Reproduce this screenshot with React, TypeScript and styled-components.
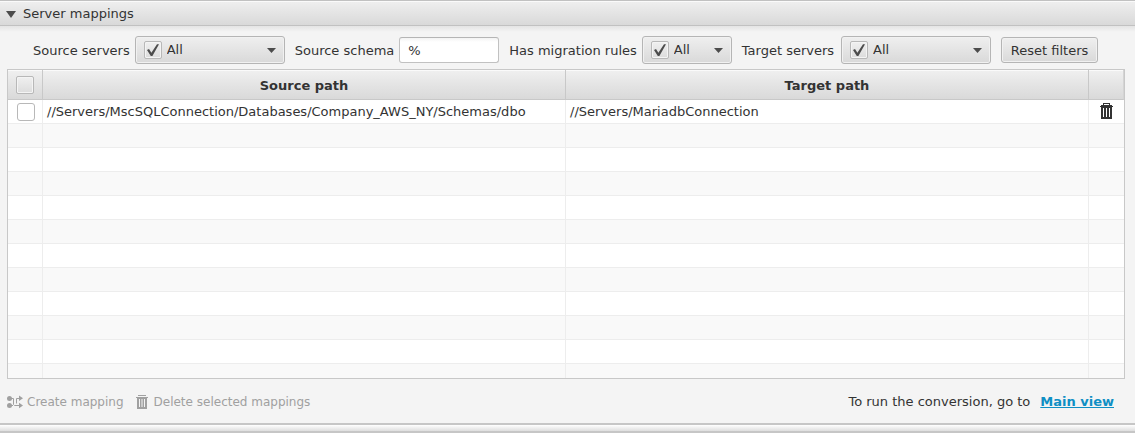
import React from "react";
import styled, { createGlobalStyle } from "styled-components";

const GlobalStyle = createGlobalStyle`
  * { box-sizing: border-box; }
  body {
    margin: 0;
    background: #f4f4f4;
    color: #333;
    font: 13px/16px "DejaVu Sans", Verdana, sans-serif;
  }
  button, input, select { font: inherit; color: inherit; margin: 0; }
`;

const Page = styled.main`
  display: flex;
  flex-direction: column;
`;

const TitleButton = styled.button`
  display: flex;
  align-items: center;
  gap: 7px;
  height: 26px;
  padding: 2px 6px 0;
  border: solid #c1c1c1;
  border-width: 1px 0;
  background: linear-gradient(#efefef, #d9d9d9);
  box-shadow: inset 0 1px #fafafa;
`;

const Content = styled.section`
  padding: 10px 10px 0 7px;
  background: linear-gradient(#e4e4e4, #f4f4f4 6px);
`;

const Filters = styled.form`
  display: flex;
  align-items: center;
  gap: 10px;
  height: 28px;
  margin: 0 0 5px 26px;
  white-space: nowrap;
`;

const Field = styled.div<{ $gap?: number }>`
  display: flex;
  align-items: center;
  gap: ${({ $gap = 5 }) => $gap}px;
`;

const FieldLabel = styled.label`
  padding-top: 2px;
`;

const Stack = styled.div<{ $width?: number }>`
  display: grid;
  align-items: center;
  width: ${({ $width = 18 }) => $width}px;
  > * { grid-area: 1 / 1; }
`;

const Select = styled.select`
  appearance: none;
  width: 100%;
  height: 28px;
  padding: 0 24px 0 31px;
  border: 1px solid #b5b5b5;
  border-radius: 3px;
  background: linear-gradient(#efefef, #d9d9d9);
  box-shadow: inset 0 0 0 1px #f1f1f1;
`;

const SelectTick = styled.span`
  justify-self: start;
  margin-left: 9px;
  pointer-events: none;
`;

const SelectArrow = styled.svg`
  justify-self: end;
  margin-right: 9px;
  pointer-events: none;
`;

const CheckInput = styled.input<{ $plain?: boolean }>`
  appearance: none;
  width: 18px;
  height: 18px;
  border: 1px solid #b8b8b8;
  border-radius: ${({ $plain }) => ($plain ? 3 : 2)}px;
  background: ${({ $plain }) => ($plain ? "#fff" : "linear-gradient(#f0f0f0, #dcdcdc)")};
  box-shadow: inset 0 0 0 1px ${({ $plain }) => ($plain ? "#fff" : "#f4f4f4")};
`;

const TickMark = styled.svg`
  pointer-events: none;
`;

const TextInput = styled.input`
  width: 100px;
  height: 26px;
  padding: 0 8px;
  border: 1px solid #c1c1c1;
  border-top-color: #b5b5b5;
  border-radius: 3px;
  background: linear-gradient(#f3f3f3, #fff 4px);
`;

const ResetButton = styled.button`
  height: 26px;
  min-width: 97px;
  padding: 2px 8px 0;
  border: 1px solid #b5b5b5;
  border-radius: 3px;
  background: linear-gradient(#efefef, #d9d9d9);
  box-shadow: inset 0 0 0 1px #f1f1f1;
`;

const TableView = styled.div`
  height: 310px;
  overflow: hidden;
  border: 1px solid #c8c8c8;
  background: #fff;
`;

const Table = styled.table`
  width: 100%;
  table-layout: fixed;
  border-collapse: separate;
  border-spacing: 0;
`;

const NarrowCol = styled.col`
  width: 35px;
`;

const HeadCell = styled.th<{ $control?: boolean }>`
  height: 30px;
  padding: ${({ $control }) => ($control ? "0 8px" : "2px 8px 0")};
  border-right: 1px solid #c8c8c8;
  border-bottom: 1px solid #c8c8c8;
  background: linear-gradient(#fafafa 1px, #efefef 1px, #d9d9d9);
  &:last-child { border-right-color: #d4d4d4; }
`;

const Row = styled.tr`
  background: #fff;
  &:nth-child(even) { background: #f9f9f9; }
`;

const Cell = styled.td<{ $inset?: number }>`
  height: 24px;
  padding: 0 0 0 ${({ $inset = 4 }) => $inset}px;
  border-right: 1px solid #ededed;
  border-bottom: 1px solid #ededed;
  white-space: nowrap;
  overflow: hidden;
  &:last-child { border-right: 0; }
`;

const IconButton = styled.button`
  display: grid;
  place-items: center;
  width: 35px;
  height: 22px;
  padding: 0 0 2px;
  border: 0;
  background: none;
  color: #333;
`;

const Footer = styled.footer`
  display: flex;
  justify-content: space-between;
  align-items: center;
  height: 44px;
  padding: 2px 11px 0 0;
`;

const Actions = styled.div`
  display: flex;
  gap: 12px;
  font-size: 12px;
`;

const ActionButton = styled.button<{ $gap: number }>`
  display: flex;
  align-items: center;
  gap: ${({ $gap }) => $gap}px;
  padding: 0;
  border: 0;
  background: none;
  &:disabled { color: #a0a0a0; }
`;

const MainLink = styled.a`
  margin-left: 10px;
  color: #0f8fc4;
  font-weight: bold;
`;

const Divider = styled.div`
  height: 10px;
  border: solid #c6c6c6;
  border-width: 2px 0;
  background: linear-gradient(#fff, #dedede);
`;

function CheckBox({ label, checked, plain }: { label: string; checked?: boolean; plain?: boolean }) {
  return (
    <Stack>
      <CheckInput type="checkbox" aria-label={label} defaultChecked={checked} $plain={plain} />
      {checked && (
        <TickMark width="18" height="18" viewBox="0 0 18 18" aria-hidden="true">
          <path d="M3 9 5 8 7.4 11.8 13 3.2 15 3.2 8.4 15 6.8 15Z" fill="#4c4c4c" />
        </TickMark>
      )}
    </Stack>
  );
}

type FilterSelectProps = { id: string; label: string; width: number; gap?: number };

function FilterSelect({ id, label, width, gap }: FilterSelectProps) {
  return (
    <Field $gap={gap}>
      <FieldLabel htmlFor={id}>{label}</FieldLabel>
      <Stack $width={width}>
        <Select id={id}>
          <option>All</option>
        </Select>
        <SelectTick>
          <CheckBox label={`${label}: all`} checked />
        </SelectTick>
        <SelectArrow width="9" height="5" viewBox="0 0 9 5" aria-hidden="true">
          <path d="M0 0h9L4.5 5Z" fill="#4c4c4c" />
        </SelectArrow>
      </Stack>
    </Field>
  );
}

function TrashIcon() {
  return (
    <svg width="13" height="16" viewBox="0 0 13 16" aria-hidden="true">
      <path
        fill="currentColor"
        fillRule="evenodd"
        d="M3 0h7v2h2v1h1v1h-1v12H1V4H0V3h1V2h2ZM4 1v1h5V1ZM3 5v9h1V5ZM6 5v9h1V5ZM9 5v9h1V5Z"
      />
    </svg>
  );
}

function SmallTrashIcon() {
  return (
    <svg width="12" height="14" viewBox="0 0 12 14" aria-hidden="true">
      <path
        fill="currentColor"
        fillRule="evenodd"
        d="M2 0h8v1H2ZM0 2h12v1h-1v11H1V3H0ZM3 4v8h1V4ZM5.5 4v8h1V4ZM8 4v8h1V4Z"
      />
    </svg>
  );
}

function MappingIcon() {
  return (
    <svg width="16" height="14" viewBox="0 0 16 14" aria-hidden="true">
      <g fill="currentColor">
        <circle cx="2.5" cy="3.5" r="2.5" />
        <circle cx="2.5" cy="10.5" r="2.5" />
        <path d="M12 0.5 16 3.2 12 6ZM12 7.8 16 10.5 12 13.2Z" />
      </g>
      <path
        d="M4 3.5H6.5V9.5L7.5 10.5H12M4 10.5H6M12 3.5H9.5V8.5"
        fill="none"
        stroke="currentColor"
      />
    </svg>
  );
}

const mappings = [
  {
    source: "//Servers/MscSQLConnection/Databases/Company_AWS_NY/Schemas/dbo",
    target: "//Servers/MariadbConnection",
  },
];
const emptyRows = Array.from({ length: 11 }, (_, i) => i);

export default function App() {
  return (
    <>
      <GlobalStyle />
      <Page>
        <TitleButton type="button" aria-expanded="true">
          <svg width="10" height="7" viewBox="0 0 10 7" aria-hidden="true">
            <path d="M0 0h10L5 7Z" fill="#4c4c4c" />
          </svg>
          Server mappings
        </TitleButton>
        <Content>
          <Filters>
            <FilterSelect id="source-servers" label="Source servers" width={150} />
            <Field>
              <FieldLabel htmlFor="source-schema">Source schema</FieldLabel>
              <TextInput id="source-schema" type="text" defaultValue="%" />
            </Field>
            <FilterSelect id="migration-rules" label="Has migration rules" width={90} />
            <FilterSelect id="target-servers" label="Target servers" width={150} gap={7} />
            <ResetButton type="reset">Reset filters</ResetButton>
          </Filters>
          <TableView>
            <Table>
              <colgroup>
                <NarrowCol />
                <col />
                <col />
                <NarrowCol />
              </colgroup>
              <thead>
                <tr>
                  <HeadCell $control>
                    <CheckBox label="Select all mappings" />
                  </HeadCell>
                  <HeadCell>Source path</HeadCell>
                  <HeadCell>Target path</HeadCell>
                  <HeadCell />
                </tr>
              </thead>
              <tbody>
                {mappings.map((m) => (
                  <Row key={m.source}>
                    <Cell $inset={9}>
                      <CheckBox label="Select mapping" plain />
                    </Cell>
                    <Cell>{m.source}</Cell>
                    <Cell>{m.target}</Cell>
                    <Cell $inset={0}>
                      <IconButton type="button" aria-label="Delete mapping">
                        <TrashIcon />
                      </IconButton>
                    </Cell>
                  </Row>
                ))}
                {emptyRows.map((i) => (
                  <Row key={i}>
                    <Cell />
                    <Cell />
                    <Cell />
                    <Cell />
                  </Row>
                ))}
              </tbody>
            </Table>
          </TableView>
          <Footer>
            <Actions>
              <ActionButton type="button" disabled $gap={4}>
                <MappingIcon />
                Create mapping
              </ActionButton>
              <ActionButton type="button" disabled $gap={6}>
                <SmallTrashIcon />
                Delete selected mappings
              </ActionButton>
            </Actions>
            <span>
              To run the conversion, go to
              <MainLink href="#main">Main view</MainLink>
            </span>
          </Footer>
        </Content>
        <Divider />
      </Page>
    </>
  );
}
